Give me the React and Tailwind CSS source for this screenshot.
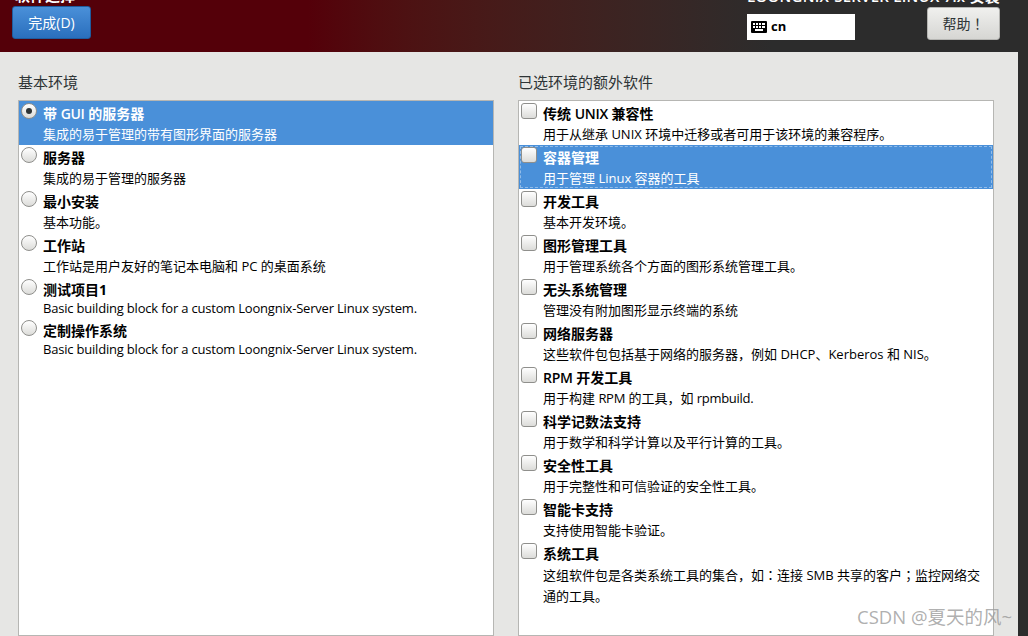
const TC = ({ children }) => <span className="font-['Noto_Sans_CJK_TC',sans-serif]">{children}</span>;
const L = ({ children }) => <span className="font-semibold tracking-[-0.3px]">{children}</span>;

const envs = [
  { t: <>带 <L>GUI</L> 的服务器</>, d: '集成的易于管理的带有图形界面的服务器', on: true },
  { t: '服务器', d: '集成的易于管理的服务器' },
  { t: '最小安装', d: '基本功能。' },
  { t: '工作站', d: '工作站是用户友好的笔记本电脑和 PC 的桌面系统' },
  { t: '测试项目1', d: 'Basic building block for a custom Loongnix-Server Linux system.', latin: true },
  { t: '定制操作系统', d: 'Basic building block for a custom Loongnix-Server Linux system.', latin: true },
];

const addons = [
  { t: <>传统 <L>UNIX</L> 兼容性</>, d: '用于从继承 UNIX 环境中迁移或者可用于该环境的兼容程序。' },
  { t: '容器管理', d: '用于管理 Linux 容器的工具', on: true, focus: true },
  { t: '开发工具', d: '基本开发环境。' },
  { t: '图形管理工具', d: '用于管理系统各个方面的图形系统管理工具。' },
  { t: '无头系统管理', d: '管理没有附加图形显示终端的系统' },
  { t: '网络服务器', d: '这些软件包包括基于网络的服务器，例如 DHCP、Kerberos 和 NIS。' },
  { t: <><L>RPM</L> 开发工具</>, d: <>用于构建 <span className="tracking-[-0.3px]">RPM</span> 的工具，如 <span className="tracking-[-0.3px]">rpmbuild.</span></> },
  { t: '科学记数法支持', d: '用于数学和科学计算以及平行计算的工具。' },
  { t: '安全性工具', d: '用于完整性和可信验证的安全性工具。' },
  { t: '智能卡支持', d: '支持使用智能卡验证。' },
  { t: '系统工具', d: <>这组软件包是各类系统工具的集合，如<TC>：</TC>连接 SMB 共享的客户<TC>；</TC>监控网络交通的工具。</> },
];

function Radio({ on }) {
  return (
    <span className="mt-[2px] ml-[2px] flex h-[16px] w-[16px] shrink-0 items-center justify-center rounded-full border border-[#8f8f8c] bg-gradient-to-b from-[#ffffff] to-[#dcdcd9]">
      {on && <span className="h-[6px] w-[6px] rounded-full bg-[#2e3436]" />}
    </span>
  );
}

function Check() {
  return <span className="mt-[2px] ml-[2px] block h-[16px] w-[16px] shrink-0 rounded-[3px] border border-[#8f8f8c] bg-gradient-to-b from-[#ffffff] to-[#dcdcd9]" />;
}

function Row({ item, mark }) {
  return (
    <div className={`relative flex gap-[6px] ${item.latin ? 'h-[41px]' : 'min-h-[44px]'} ${item.on ? 'bg-[#4a90d9] text-white' : 'text-black'}`}>
      {item.focus && <span className="absolute inset-[1px] border border-dashed border-white/40" />}
      {mark}
      <div className="min-w-0 flex-1 pr-[8px]">
        <div className="mt-[3px] text-[14px] font-bold leading-[20px]">{item.t}</div>
        <div className={`text-[13px] ${item.latin ? 'leading-[16px] tracking-[-0.2px]' : 'leading-[21px]'}`}>{item.d}</div>
      </div>
    </div>
  );
}

export default function App() {
  return (
    <div className="relative flex h-[636px] w-[1028px] flex-col overflow-hidden bg-[#2c2c2c] font-['Open_Sans','Noto_Sans_CJK_SC',sans-serif]">
      {/* Header */}
      <header className="flex h-[52px] shrink-0 justify-between overflow-hidden bg-gradient-to-r from-[#540009] from-30% to-[#2c2c2c] to-75%">
        <div className="pl-[12px]">
          <div className="-mt-[15px] pl-[3px] text-[15px] font-bold leading-[20px] text-white">软件选择</div>
          <button className="mt-[1px] h-[33px] w-[79px] rounded-[3px] border border-[#1f5c9e] bg-gradient-to-b from-[#4a90d9] to-[#2a6fbd] text-[14px] text-white">完成(D)</button>
        </div>
        <div className="w-[281px] pr-[28px]">
          <div className="-mt-[14px] whitespace-nowrap text-right text-[15px] font-semibold leading-[20px] tracking-[0.25px] text-white">LOONGNIX-SERVER LINUX 7.x 安装</div>
          <div className="flex items-start gap-[72px]">
            <div className="mt-[8px] flex h-[26px] w-[108px] items-center gap-[4px] bg-white pl-[4px] text-[13px] font-bold text-black">
              <svg width="16" height="12" viewBox="0 0 16 12">
                <rect width="16" height="12" fill="#000" rx="1" />
                <g fill="#fff">
                  <rect x="2" y="2" width="2" height="2" /><rect x="5" y="2" width="2" height="2" /><rect x="8" y="2" width="2" height="2" /><rect x="11" y="2" width="3" height="2" />
                  <rect x="2" y="5" width="2" height="2" /><rect x="5" y="5" width="2" height="2" /><rect x="8" y="5" width="2" height="2" /><rect x="11" y="5" width="3" height="2" />
                  <rect x="4" y="8" width="8" height="2" />
                </g>
              </svg>
              cn
            </div>
            <button className="mt-[1px] h-[33px] w-[73px] rounded-[3px] border border-[#b5b5b2] bg-gradient-to-b from-[#f0f0ee] to-[#d6d6d3] text-[14px] text-[#2e3436]"><TC>帮助！</TC></button>
          </div>
        </div>
      </header>

      <div className="flex min-h-0 flex-1">
        {/* Content */}
        <main className="flex flex-1 gap-[24px] bg-[#e6e6e4] pl-[18px] pr-[24px] pt-[20px]">
          <section className="flex w-[476px] flex-col">
            <h2 className="text-[15px] font-normal leading-[20px] text-[#2e3436]">基本环境</h2>
            <div className="mt-[8px] flex-1 border border-[#b6b6b3] bg-white">
              {envs.map((e, i) => <Row key={i} item={e} mark={<Radio on={e.on} />} />)}
            </div>
          </section>
          <section className="flex w-[476px] flex-col">
            <h2 className="text-[15px] font-normal leading-[20px] text-[#2e3436]">已选环境的额外软件</h2>
            <div className="mt-[8px] flex-1 border border-[#b6b6b3] bg-white">
              {addons.map((a, i) => <Row key={i} item={a} mark={<Check />} />)}
            </div>
          </section>
        </main>
        <div className="w-[10px] shrink-0 bg-[#2c2c2c]" />
      </div>

      <div className="absolute left-[857px] top-[606px] whitespace-nowrap text-[18.5px] leading-[22px] text-[#9a9a9a]/80">CSDN @夏天的风~</div>
    </div>
  );
}
